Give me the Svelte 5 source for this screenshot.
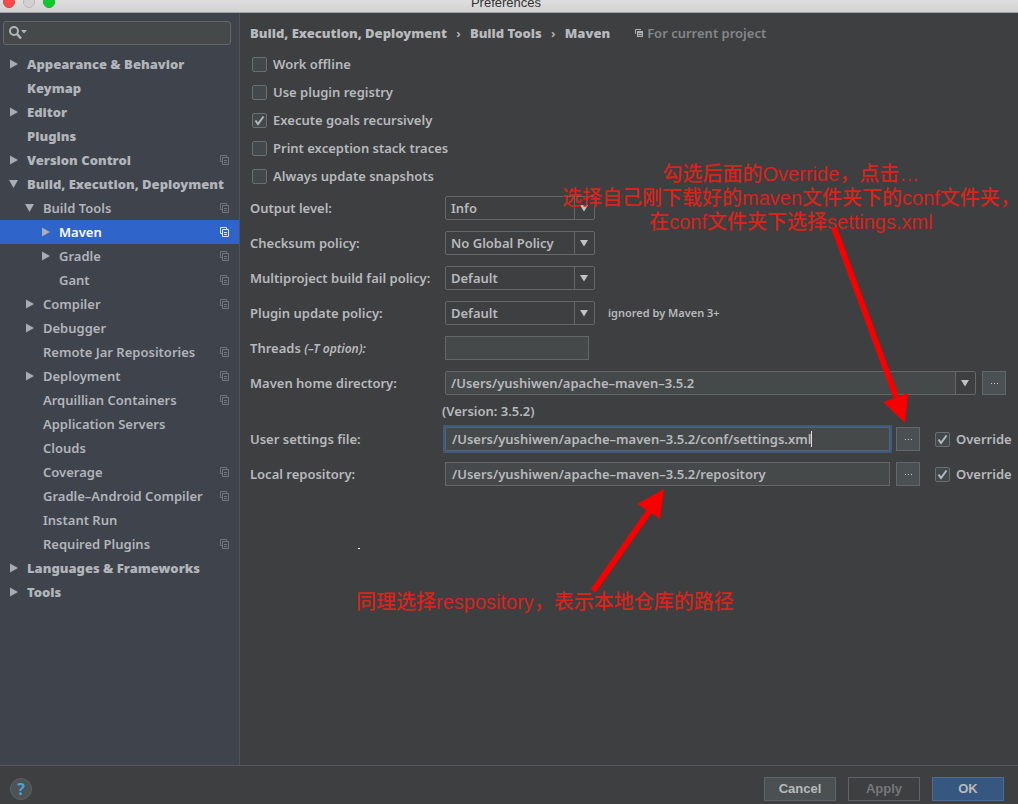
<script>
  const tree = [
    { label: 'Appearance & Behavior', depth: 0, arrow: 'closed' },
    { label: 'Keymap', depth: 0 },
    { label: 'Editor', depth: 0, arrow: 'closed' },
    { label: 'Plugins', depth: 0 },
    { label: 'Version Control', depth: 0, arrow: 'closed', project: true },
    { label: 'Build, Execution, Deployment', depth: 0, arrow: 'open' },
    { label: 'Build Tools', depth: 1, arrow: 'open', project: true },
    { label: 'Maven', depth: 2, arrow: 'closed', project: true, selected: true },
    { label: 'Gradle', depth: 2, arrow: 'closed', project: true },
    { label: 'Gant', depth: 2, project: true },
    { label: 'Compiler', depth: 1, arrow: 'closed', project: true },
    { label: 'Debugger', depth: 1, arrow: 'closed' },
    { label: 'Remote Jar Repositories', depth: 1, project: true },
    { label: 'Deployment', depth: 1, arrow: 'closed', project: true },
    { label: 'Arquillian Containers', depth: 1, project: true },
    { label: 'Application Servers', depth: 1 },
    { label: 'Clouds', depth: 1 },
    { label: 'Coverage', depth: 1, project: true },
    { label: 'Gradle–Android Compiler', depth: 1, project: true },
    { label: 'Instant Run', depth: 1 },
    { label: 'Required Plugins', depth: 1, project: true },
    { label: 'Languages & Frameworks', depth: 0, arrow: 'closed' },
    { label: 'Tools', depth: 0, arrow: 'closed' }
  ];

  const options = [
    { label: 'Work offline', checked: false },
    { label: 'Use plugin registry', checked: false },
    { label: 'Execute goals recursively', checked: true },
    { label: 'Print exception stack traces', checked: false },
    { label: 'Always update snapshots', checked: false }
  ];

  const policies = [
    { id: 'output', label: 'Output level:', value: 'Info' },
    { id: 'checksum', label: 'Checksum policy:', value: 'No Global Policy' },
    { id: 'fail', label: 'Multiproject build fail policy:', value: 'Default' },
    { id: 'update', label: 'Plugin update policy:', value: 'Default', note: 'ignored by Maven 3+' }
  ];
</script>

{#snippet pages()}
  <svg class="pages" width="10" height="10" viewBox="0 0 10 10" aria-hidden="true">
    <path d="M2.5 6.5H.5V.5H6.5V2.5M2.5 2.5H8.5V9.5H2.5ZM4 5.5H7M4 7.5H7" fill="none" stroke="currentColor" />
  </svg>
{/snippet}

{#snippet down()}
  <svg width="10" height="8" viewBox="0 0 10 8" aria-hidden="true">
    <path d="M0 1H8L4 7.5Z" fill="#c0c2c4" />
  </svg>
{/snippet}

{#snippet check(label, checked)}
  <label class="check">
    <input type="checkbox" {checked} />
    <svg width="15" height="15" viewBox="0 0 15 15" aria-hidden="true">
      <path d="M3.5 7.5L6 11L11.5 3.5" fill="none" stroke="#b4b9bc" stroke-width="2" />
    </svg>
    <span>{label}</span>
  </label>
{/snippet}

<div class="window">
  <header>
    <span class="lights"><i class="red"></i><i class="gray"></i><i class="green"></i></span>
    <span class="title">Preferences</span>
  </header>

  <div class="body">
    <aside>
      <label class="search">
        <svg width="20" height="16" viewBox="0 0 20 16" aria-hidden="true">
          <circle cx="6" cy="6" r="4" fill="none" stroke="#b3b6b8" stroke-width="2" />
          <path d="M9 9L13 13.5" stroke="#b3b6b8" stroke-width="2.5" />
          <path d="M13 5H19L16 8.5Z" fill="#b3b6b8" />
        </svg>
        <input type="text" aria-label="Search" />
      </label>
      <nav>
        {#each tree as item}
          <a href="#settings" class="d{item.depth}" class:selected={item.selected}>
            <span class="arrow">
              {#if item.arrow}
                <svg width="10" height="10" viewBox="0 0 10 10" aria-hidden="true">
                  <path d={item.arrow === 'open' ? 'M1 1H10L5.5 9Z' : 'M2 .5V9.5L10 5Z'} fill="#a9adb3" />
                </svg>
              {/if}
            </span>
            <span class="name">{item.label}</span>
            {#if item.project}{@render pages()}{/if}
          </a>
        {/each}
      </nav>
    </aside>

    <main>
      <div class="crumbs">
        <b>Build, Execution, Deployment</b><span class="sep">›</span><b>Build Tools</b><span class="sep">›</span><b>Maven</b>
        <span class="scope">
          <svg width="10" height="10" viewBox="0 0 10 10" aria-hidden="true">
            <path d="M1.5 6V1.5H7" fill="none" stroke="#b0b2b4" />
            <path d="M3 3H9V9H3Z" fill="#b0b2b4" />
            <path d="M4 5.5H8M4 7.5H8" stroke="#5b5e60" />
          </svg>
          For current project
        </span>
      </div>

      <div class="checks">
        {#each options as o}{@render check(o.label, o.checked)}{/each}
      </div>

      {#each policies as p}
        <div class="row">
          <label class="caption" for={p.id}>{p.label}</label>
          <span class="combo">
            <select id={p.id}><option>{p.value}</option></select>
            <span class="drop">{@render down()}</span>
          </span>
          {#if p.note}<small>{p.note}</small>{/if}
        </div>
      {/each}

      <div class="row">
        <label class="caption" for="threads">Threads <em>(–T option):</em></label>
        <input id="threads" class="field threads" type="text" />
      </div>

      <div class="row">
        <label class="caption" for="home">Maven home directory:</label>
        <span class="combo wide">
          <input id="home" type="text" value="/Users/yushiwen/apache–maven–3.5.2" />
          <button class="drop" aria-label="Show list">{@render down()}</button>
        </span>
        <button class="browse" aria-label="Browse"><i></i><i></i><i></i></button>
      </div>
      <p class="version">(Version: 3.5.2)</p>

      <div class="row tight">
        <label class="caption" for="settings">User settings file:</label>
        <span class="field focused">
          <input id="settings" type="text" value="/Users/yushiwen/apache–maven–3.5.2/conf/settings.xml" />
          <span class="cursor"></span>
        </span>
        <button class="browse" aria-label="Browse"><i></i><i></i><i></i></button>
        <span class="override">{@render check('Override', true)}</span>
      </div>

      <div class="row">
        <label class="caption" for="repo">Local repository:</label>
        <input id="repo" class="field" type="text" value="/Users/yushiwen/apache–maven–3.5.2/repository" />
        <button class="browse" aria-label="Browse"><i></i><i></i><i></i></button>
        <span class="override">{@render check('Override', true)}</span>
      </div>

      <p class="note top">勾选后面的Override，点击…<br />选择自己刚下载好的maven文件夹下的conf文件夹，<br />在conf文件夹下选择settings.xml</p>
      <p class="note bottom">同理选择respository，表示本地仓库的路径</p>
      <svg class="pointer down" width="80" height="212" viewBox="0 0 80 212" aria-hidden="true">
        <path d="M4 1L66 170" stroke="#f80000" stroke-width="6" />
        <path d="M53 175L78 166L75 196Z" fill="#f80000" />
      </svg>
      <svg class="pointer up" width="80" height="110" viewBox="0 0 80 110" aria-hidden="true">
        <path d="M4 103L61 22" stroke="#f80000" stroke-width="6" />
        <path d="M48 16L75 1L71 31Z" fill="#f80000" />
      </svg>
      <span class="speck"></span>
    </main>
  </div>

  <footer>
    <button class="help" aria-label="Help">?</button>
    <button class="action">Cancel</button>
    <button class="action disabled" disabled>Apply</button>
    <button class="action primary">OK</button>
  </footer>
</div>

<style>
  :global(body) { margin: 0; background: #3d3f41; }
  .window, .window :global(*) { box-sizing: border-box; }
  .window {
    min-height: 100vh;
    display: flex;
    flex-direction: column;
    background: #3d3f41;
    color: #b8babc;
    font: 600 13px/18px "Noto Sans", sans-serif;
  }
  input, select, button { font: inherit; color: inherit; margin: 0; outline: 0; }
  p { margin: 0; }
  b { font-weight: 900; }

  header {
    height: 13px;
    flex: none;
    display: flex;
    align-items: end;
    overflow: hidden;
    position: relative;
    justify-content: center;
    background: linear-gradient(#dedede, #d2d2d2);
    border-bottom: 1px solid #a2a4a4;
  }
  .title { font: 13px/18px "Liberation Sans", sans-serif; color: #333; margin-right: 6px; }
  .lights { position: absolute; left: 3px; bottom: 4px; display: flex; gap: 8px; }
  .lights i { width: 12px; height: 12px; border-radius: 50%; }
  .red { background: #fb4a48; border: 1px solid #df3c3a; }
  .gray { background: #d2d0d0; border: 1px solid #b9b7b7; }
  .green { background: #0fca2c; border: 1px solid #0cb425; }

  .body { flex: 1; display: flex; }
  aside { width: 240px; flex: none; background: #3e434c; border-right: 1px solid #50545a; }
  .search {
    display: flex;
    align-items: center;
    height: 24px;
    margin: 8px 8px 7px 3px;
    padding: 0 4px;
    border: 1px solid #646869;
    border-radius: 3px;
    background: #45494a;
  }
  .search input { flex: 1; min-width: 0; border: 0; background: none; }
  nav a {
    display: flex;
    align-items: center;
    height: 24px;
    padding: 0 9px 0 8px;
    color: #b2b5ba;
    text-decoration: none;
    white-space: nowrap;
  }
  nav .d0 { font-weight: 900; }
  nav .d1 { padding-left: 24px; }
  nav .d2 { padding-left: 40px; }
  nav .selected { background: #2f65ca; color: #fff; }
  .arrow { width: 19px; display: flex; flex: none; }
  .name { flex: 1; }
  .pages { flex: none; color: #70757b; }
  .selected .pages { color: #dfe6f5; }

  main { flex: 1; min-width: 0; position: relative; padding: 11px 9px 0 10px; }
  .crumbs { display: flex; align-items: center; white-space: nowrap; }
  .sep { width: 23px; text-align: center; }
  .scope { display: flex; align-items: center; color: #85878a; margin-left: 24px; gap: 3px; }
  .checks { margin: 8px 0 0 2px; }
  .check { display: flex; align-items: center; position: relative; height: 28px; gap: 6px; }
  .check input {
    appearance: none;
    flex: none;
    width: 15px;
    height: 15px;
    border: 1px solid #6b6f70;
    border-radius: 2px;
    background: #43494a;
  }
  .check svg { position: absolute; left: 0; visibility: hidden; }
  .check input:checked + svg { visibility: visible; }

  .row { display: flex; align-items: center; height: 24px; margin-top: 11px; white-space: nowrap; }
  .checks + .row { margin-top: 6px; }
  .row.tight { margin-top: 7px; }
  .caption { width: 195px; flex: none; }
  .caption em { font-size: 12px; }
  small { font-size: 11px; margin-left: 13px; }
  .combo {
    width: 150px;
    height: 24px;
    display: flex;
    position: relative;
    border: 1px solid #646869;
    border-radius: 2px;
  }
  .combo select { flex: 1; appearance: none; border: 0; background: none; padding: 0 5px; }
  .combo select option { color: #222; }
  .combo input { flex: 1; min-width: 0; border: 0; background: #45494a; padding: 0 5px; }
  .drop {
    width: 20px;
    display: flex;
    align-items: center;
    justify-content: center;
    padding: 0;
    border: 0;
    border-left: 1px solid #646869;
    background: none;
  }
  select + .drop { position: absolute; right: 0; top: 0; bottom: 0; pointer-events: none; }
  .combo.wide { flex: 1; margin-right: 6px; }
  .wide ~ .browse { margin-right: 3px; }
  .field {
    flex: 1;
    min-width: 0;
    height: 24px;
    border: 1px solid #646869;
    background: #45494a;
    padding: 0 6px;
    margin-right: 6px;
  }
  .threads { flex: none; width: 144px; }
  .focused { display: flex; align-items: center; border-color: #4f6478; box-shadow: 0 0 0 2px #41597a; }
  .focused input { field-sizing: content; border: 0; padding: 0; background: none; }
  .cursor { width: 1px; height: 16px; background: #dcdcdc; }
  .browse {
    width: 24px;
    height: 24px;
    flex: none;
    display: flex;
    align-items: center;
    justify-content: center;
    gap: 2px;
    padding: 0;
    border: 1px solid #62676a;
    background: #4b5052;
  }
  .browse i { width: 1px; height: 1px; background: #c8cacc; }
  .override { flex: none; width: 74px; margin-left: 15px; }
  .version { margin: 7px 0 0 192px; }

  .note {
    position: absolute;
    font: 500 20px/24px "Liberation Sans", "Noto Sans CJK SC", sans-serif;
    color: #d8241b;
    text-align: center;
    white-space: nowrap;
  }
  .note.top { left: 322px; top: 149px; }
  .note.bottom { left: 116px; top: 577px; }
  .pointer { position: absolute; pointer-events: none; }
  .pointer.down { left: 590px; top: 214px; }
  .pointer.up { left: 349px; top: 475px; }
  .speck { position: absolute; left: 118px; top: 535px; width: 2px; height: 1px; background: #fff; }

  footer {
    height: 39px;
    flex: none;
    display: flex;
    align-items: center;
    gap: 12px;
    padding: 8px 14px 0 10px;
    border-top: 1px solid #55585a;
  }
  .help {
    width: 22px;
    height: 22px;
    margin-right: auto;
    padding: 0;
    border: 1px solid #5e6264;
    border-radius: 50%;
    background: #4d5254;
    color: #4ba3d6;
    font: 700 16px/20px "Noto Sans", sans-serif;
  }
  .action {
    width: 72px;
    height: 24px;
    padding: 0;
    border: 1px solid #5f6466;
    background: #4b5052;
    font: 700 13px/20px "Liberation Sans", sans-serif;
  }
  .disabled { background: none; color: #75787a; }
  .primary { background: #365880; border-color: #4a6d94; }
</style>
